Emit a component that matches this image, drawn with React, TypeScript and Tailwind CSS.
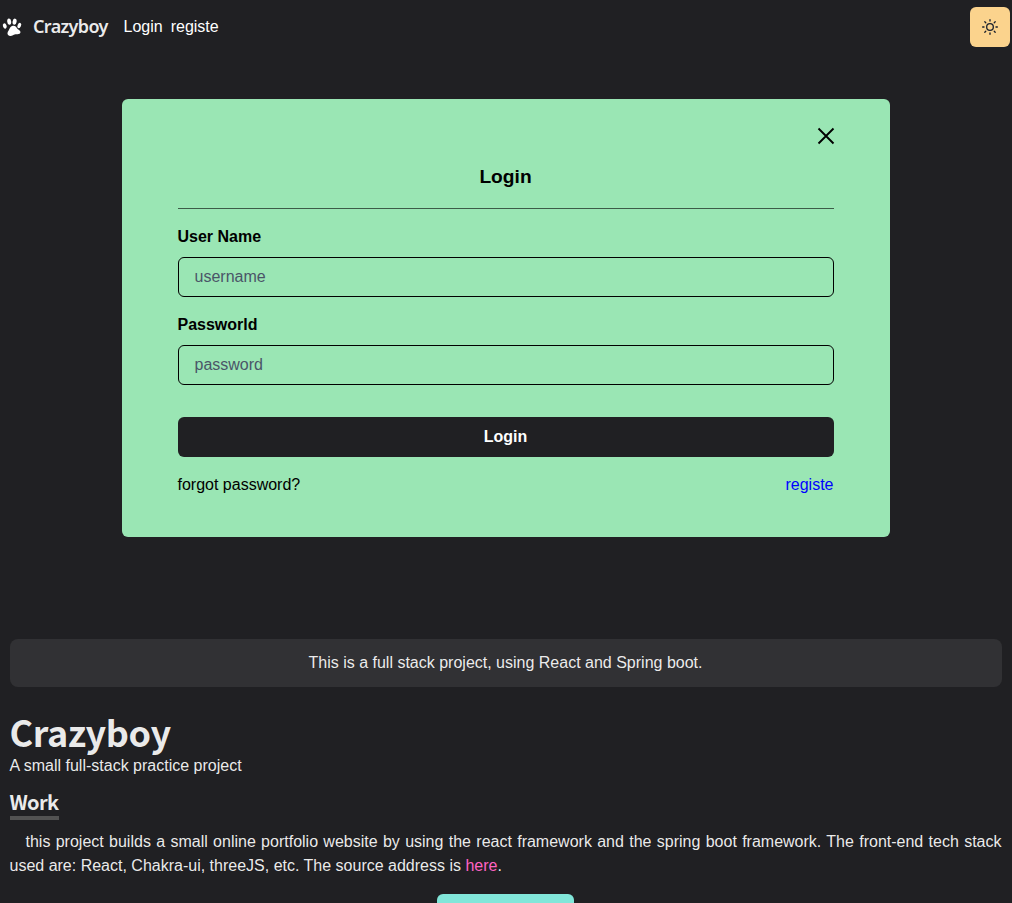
import React from "react";

function Paw() {
  return (
    <svg className="ml-0.5 h-5 w-5 shrink-0" viewBox="0 0 20 20" fill="#fff">
      <ellipse cx="2.8" cy="9" rx="1.8" ry="2.8" transform="rotate(-22 2.8 9)" />
      <ellipse cx="7.2" cy="4.6" rx="2" ry="3.1" transform="rotate(-6 7.2 4.6)" />
      <ellipse cx="12.6" cy="4.7" rx="2" ry="3.1" transform="rotate(10 12.6 4.7)" />
      <ellipse cx="17.3" cy="8.5" rx="1.7" ry="2.8" transform="rotate(24 17.3 8.5)" />
      <path d="M11 8.800c2.200-.2 3.200 1.100 4 2.400.8 1.300 3.500 2 3.500 3.900 0 1.700-1.700 2.300-3.400 2.200-1.800-.1-2.800.3-4.100 1-1.500.9-3.700 1.300-4.900-.2-1.100-1.400-.6-2.900.4-4.300 1.200-1.700 1.500-4.700 4.500-5z" />
    </svg>
  );
}

function Sun() {
  return (
    <svg className="h-4 w-4" viewBox="0 0 24 24" fill="none" stroke="#1A202C" strokeWidth="2" strokeLinecap="round" strokeLinejoin="round">
      <circle cx="12" cy="12" r="5" />
      <path d="M12 1v2M12 21v2M4.22 4.22l1.42 1.42M18.36 18.36l1.42 1.42M1 12h2M21 12h2M4.22 19.78l1.42-1.42M18.36 5.64l1.42-1.42" />
    </svg>
  );
}

function Field({ label, placeholder, type }: { label: string; placeholder: string; type: string }) {
  return (
    <label className="block">
      <span className="block pb-2 font-bold">{label}</span>
      <input
        type={type}
        placeholder={placeholder}
        className="block h-10 w-full rounded-md border border-black bg-transparent px-4 placeholder:text-[#4a5568]"
      />
    </label>
  );
}

export default function App() {
  return (
    <div className="h-[903px] overflow-hidden bg-[#202023] font-['Liberation_Sans',sans-serif] text-base leading-6 text-white/92">
      <header className="flex h-[54px] items-center pr-0.5">
        <Paw />
        <span className="ml-[11px] inline-block w-[75px] pb-0.5 text-lg leading-6 font-semibold tracking-[-0.65px] whitespace-nowrap font-['Noto_Sans',sans-serif]">
          Crazyboy
        </span>
        <a className="ml-[15.5px] text-white">Login</a>
        <a className="ml-2 text-white">registe</a>
        <button aria-label="Toggle theme" className="ml-auto flex h-10 w-10 items-center justify-center rounded-md bg-[#FBD38D]">
          <Sun />
        </button>
      </header>

      <div className="flex justify-center pr-px">
        <section className="mt-[45px] h-[438px] w-[768px] rounded-md bg-[#9AE6B4] px-14 text-black">
          <div className="flex h-[58px] items-end justify-end pb-3">
            <svg className="-mr-px h-[18px] w-[18px]" viewBox="0 0 18 18" stroke="#000" strokeWidth="1.9" fill="none">
              <path d="M1.500 1.500l15 15M16.500 1.500l-15 15" />
            </svg>
          </div>
          <h2 className="flex h-[51px] items-start justify-center pt-2 text-[19.2px] leading-6 font-bold">Login</h2>
          <hr className="border-black/60" />
          <div className="mt-4 flex flex-col gap-4">
            <Field label="User Name" placeholder="username" type="text" />
            <Field label="Passworld" placeholder="password" type="password" />
          </div>
          <button className="mt-8 block h-10 w-full rounded-md bg-[#202023] font-bold text-white">Login</button>
          <div className="mt-4 flex justify-between">
            <a>forgot password?</a>
            <a className="text-[#0000ff]">registe</a>
          </div>
        </section>
      </div>

      <main className="mt-[102px] pr-[10.5px] pl-[9.5px]">
        <div className="flex h-12 items-center justify-center rounded-lg bg-[#313134]">
          This is a full stack project, using React and Spring boot.
        </div>
        <h1 className="mt-6 h-[43px] text-[36px] leading-[43px] font-bold tracking-[-0.4px] font-['Noto_Sans_CJK_JP',sans-serif]">
          <span className="block h-[43px] leading-[40px]">Crazyboy</span>
        </h1>
        <p>A small full-stack practice project</p>
        <h3 className="mt-3 flex">
          <span className="h-[30px] w-[49px] border-b-4 border-[#525252] text-xl leading-[23px] font-bold tracking-[-0.7px] font-['Noto_Sans_CJK_JP',sans-serif]">Work</span>
        </h3>
        <p className="mt-[10px] text-justify indent-4">
          this project builds a small online portfolio website by using the react framework and the spring boot framework. The front-end tech stack used are: React, Chakra-ui, threeJS, etc. The source address is <a className="text-[#ff63c3]">here</a>.
        </p>
        <div className="mt-4 flex justify-center">
          <div className="h-10 w-[137px] rounded-md bg-[#81E6D9]" />
        </div>
      </main>
    </div>
  );
}
